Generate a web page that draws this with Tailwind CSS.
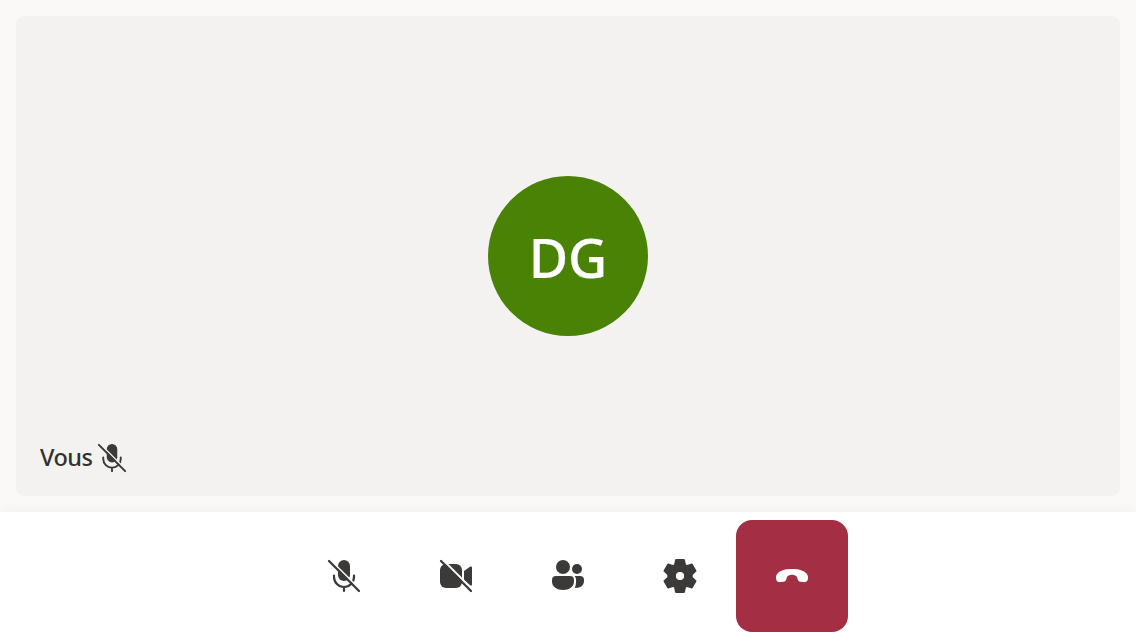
<!DOCTYPE html>
<html lang="fr">
<head>
<meta charset="utf-8">
<title>Appel</title>
<script src="https://cdn.jsdelivr.net/npm/@tailwindcss/browser@4"></script>
</head>
<body class="flex h-screen flex-col overflow-hidden bg-[#faf9f8] font-['Noto_Sans',sans-serif] text-[#323130]">
<svg class="hidden">
  <symbol id="mic-off" viewBox="0 0 48 48">
    <rect x="18" y="8" width="12" height="21" rx="6" fill="#3b3a39"/>
    <path d="M14 23.5V25a10 10 0 0 0 20 0v-1.5M24 35v4" fill="none" stroke="#3b3a39" stroke-width="2.200" stroke-linecap="round"/>
    <path d="M10.300 7.700 35 32.400" stroke="currentColor" stroke-width="1.600"/>
    <path d="M9 9 39 39" stroke="#3b3a39" stroke-width="2.300" stroke-linecap="round"/>
  </symbol>
</svg>
<main class="min-h-0 flex-1 p-4">
  <section class="relative flex h-full items-center justify-center rounded-lg bg-[#f3f2f1]">
    <div class="flex size-40 items-center justify-center rounded-full bg-[#498205] text-[54px] leading-none font-medium text-white"><span class="pt-[2px] [-webkit-text-stroke:0.2px_white]">DG</span></div>
    <div class="absolute bottom-5 left-6 flex h-9 items-center text-[23.5px] font-medium"><span class="w-[51px] tracking-[-0.5px]">Vous</span>
      <svg class="size-[42px] text-[#f3f2f1]"><use href="#mic-off"/></svg>
    </div>
  </section>
</main>
<nav class="z-10 flex h-32 shrink-0 justify-center bg-white py-2 shadow-[0_0_14px_rgba(0,0,0,0.045)]">
  <button class="flex size-28 items-center justify-center"><svg class="size-12 text-white"><use href="#mic-off"/></svg></button>
  <button class="flex size-28 items-center justify-center">
    <svg class="size-12" viewBox="0 0 48 48"><rect x="8" y="12" width="22" height="24" rx="6" fill="#3b3a39"/><path d="m32 19 6-4.300c1-.7 2-.2 2 .9v16.800c0 1.100-1 1.600-2 .9L32 28Z" fill="#3b3a39"/><path d="M10.500 7.500 41 38" stroke="white" stroke-width="2"/><path d="M9 9 39 39" stroke="#3b3a39" stroke-width="2.300" stroke-linecap="round"/></svg>
  </button>
  <button class="flex size-28 items-center justify-center">
    <svg class="size-12" viewBox="0 0 48 48" fill="#3b3a39"><circle cx="19" cy="15" r="7"/><circle cx="33" cy="17" r="5"/><path d="M12 24h14a4 4 0 0 1 4 4v1.500C30 35 25 38 19 38S8 35 8 29.500V28a4 4 0 0 1 4-4Z"/><path d="M30.500 24H36a4 4 0 0 1 4 4v.8c0 5-4 7.200-8.500 7.100-.3 0-.5 0-.8-.1 1-1.800 1.300-3.800 1.300-6.300V28c0-1.500-.5-3-1.500-4Z"/></svg>
  </button>
  <button class="flex size-28 items-center justify-center">
    <svg class="size-12" viewBox="0 0 48 48" fill="#3b3a39" stroke="#3b3a39" stroke-width="1.800" stroke-linejoin="round"><path fill-rule="evenodd" d="M20 8h8l1.200 5.100 1.600.9 5.100-1.600 3.700 6.500-3.800 3.600v3l3.800 3.600-3.700 6.500-5.100-1.600-1.600.9L28 40h-8l-1.200-5.100-1.600-.9-5.100 1.600-3.700-6.500 3.800-3.600v-3l-3.800-3.600 3.700-6.500 5.100 1.600 1.600-.9ZM24 19a5 5 0 1 0 0 10 5 5 0 0 0 0-10Z"/></svg>
  </button>
  <button class="flex size-28 items-center justify-center rounded-2xl bg-[#a42e43]">
    <svg class="size-12" viewBox="0 0 48 48" fill="white"><path d="M24 17c6.500 0 11.500 1.400 14.200 4.200 1.700 1.700 2.100 3.800 1.600 6.300-.5 2.100-2.300 2.900-4.500 2.600l-2.800-.4c-1.600-.3-2.400-1-2.800-2.500l-.8-2.500C27.200 23.300 26 22.700 24 22.700s-3.200.6-4.900 2l-.8 2.500c-.4 1.500-1.200 2.200-2.800 2.500l-2.800.4c-2.200.3-4-.5-4.500-2.600-.5-2.500-.1-4.600 1.600-6.300C12.500 18.400 17.500 17 24 17Z"/></svg>
  </button>
</nav>
</body>
</html>
